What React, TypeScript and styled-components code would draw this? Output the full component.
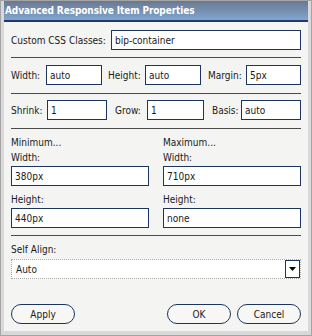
import React from "react";
import styled, { createGlobalStyle } from "styled-components";

const Global = createGlobalStyle`
  html, body { margin: 0; padding: 0; background: #d8d8d8; }
  * { box-sizing: border-box; }
`;

const Frame = styled.div`
  width: 312px;
  height: 336px;
  border: 1px solid #a4a4a4;
  background: #d9d9d9;
  padding: 0 3px 4px 3px;
  display: flex;
  font-family: "DejaVu Sans Condensed", "Liberation Sans", Arial, sans-serif;
  font-size: 10px;
  color: #1a1a1a;
  overflow: hidden;
`;

const Window = styled.div`
  flex: 1;
  background: #f4f4f2;
  display: flex;
  flex-direction: column;
`;

const TitleBar = styled.div`
  height: 21px;
  flex: none;
  background: linear-gradient(#6b7890, #7fa6d0);
  border-bottom: 2px solid #1d3a6a;
  color: #fff;
  font-weight: bold;
  font-size: 10px;
  letter-spacing: -0.1px;
  line-height: 20px;
  padding-left: 1px;
  white-space: nowrap;
`;

const Content = styled.div`
  padding: 8px 7px 0 7px;
  display: flex;
  flex-direction: column;
`;

const Row = styled.div<{ $mt?: number }>`
  display: flex;
  align-items: center;
  margin-top: ${(p) => p.$mt ?? 0}px;
  height: 20px;
`;

const Label = styled.span<{ $w?: number; $ml?: number }>`
  white-space: nowrap;
  width: ${(p) => (p.$w ? `${p.$w}px` : "auto")};
  padding-left: ${(p) => p.$ml ?? 0}px;
  flex: none;
`;

const Input = styled.div<{ $w?: number; $mt?: number }>`
  height: 20px;
  width: ${(p) => (p.$w ? `${p.$w}px` : "auto")};
  flex: ${(p) => (p.$w ? "none" : "1")};
  margin-top: ${(p) => p.$mt ?? 0}px;
  border: 1px solid #1d355e;
  background: #fff;
  padding: 0 3px;
  line-height: 19px;
  white-space: nowrap;
`;

const Separator = styled.div<{ $mt: number }>`
  height: 1px;
  flex: none;
  background: #4a4a4a;
  margin-top: ${(p) => p.$mt}px;
`;

const Columns = styled.div`
  display: grid;
  grid-template-columns: 138px 138px;
  column-gap: 14px;
`;

const Column = styled.div`
  display: flex;
  flex-direction: column;
`;

const Caption = styled.div<{ $mt?: number }>`
  height: 15px;
  line-height: 15px;
  margin-top: ${(p) => p.$mt ?? 0}px;
`;

const Select = styled.div`
  margin-top: 2px;
  height: 20px;
  border: 1px dotted #a8a8a8;
  background: #fff;
  display: flex;
  align-items: center;
  padding-left: 4px;
`;

const SelectText = styled.span`
  flex: 1;
`;

const DropButton = styled.div`
  width: 15px;
  height: 18px;
  border: 1px solid #1d355e;
  background: #fff;
  display: flex;
  align-items: center;
  justify-content: center;
`;

const Buttons = styled.div`
  display: flex;
  margin-top: 25px;
  gap: 6px;
`;

const Button = styled.div<{ $push?: boolean }>`
  width: 64px;
  height: 20px;
  border: 1px solid #1d355e;
  border-radius: 10px;
  background: #f7f7f5;
  display: flex;
  align-items: center;
  justify-content: center;
  margin-left: ${(p) => (p.$push ? "auto" : "0")};
`;

export default function App() {
  return (
    <>
      <Global />
      <Frame>
        <Window>
          <TitleBar>Advanced Responsive Item Properties</TitleBar>
          <Content>
            <Row>
              <Label $w={100}>Custom CSS Classes:</Label>
              <Input>bip-container</Input>
            </Row>
            <Separator $mt={7} />
            <Row $mt={7}>
              <Label $w={35}>Width:</Label>
              <Input $w={56}>auto</Input>
              <Label $w={43} $ml={6}>Height:</Label>
              <Input $w={56}>auto</Input>
              <Label $w={45} $ml={7}>Margin:</Label>
              <Input $w={55}>5px</Input>
            </Row>
            <Separator $mt={8} />
            <Row $mt={6}>
              <Label $w={36}>Shrink:</Label>
              <Input $w={60}>1</Input>
              <Label $w={40} $ml={8}>Grow:</Label>
              <Input $w={57}>1</Input>
              <Label $w={37} $ml={8}>Basis:</Label>
              <Input $w={60}>auto</Input>
            </Row>
            <Separator $mt={8} />
            <Columns>
              <Column>
                <Caption $mt={6}>Minimum...</Caption>
                <Caption>Width:</Caption>
                <Input $w={138} $mt={1}>380px</Input>
                <Caption $mt={6}>Height:</Caption>
                <Input $w={138} $mt={1}>440px</Input>
              </Column>
              <Column>
                <Caption $mt={6}>Maximum...</Caption>
                <Caption>Width:</Caption>
                <Input $w={138} $mt={1}>710px</Input>
                <Caption $mt={6}>Height:</Caption>
                <Input $w={138} $mt={1}>none</Input>
              </Column>
            </Columns>
            <Separator $mt={7} />
            <Caption $mt={6}>Self Align:</Caption>
            <Select>
              <SelectText>Auto</SelectText>
              <DropButton>
                <svg width="7" height="4" viewBox="0 0 7 4">
                  <path d="M0 0H7L3.5 4Z" fill="#000" />
                </svg>
              </DropButton>
            </Select>
            <Buttons>
              <Button>Apply</Button>
              <Button $push>OK</Button>
              <Button>Cancel</Button>
            </Buttons>
          </Content>
        </Window>
      </Frame>
    </>
  );
}
